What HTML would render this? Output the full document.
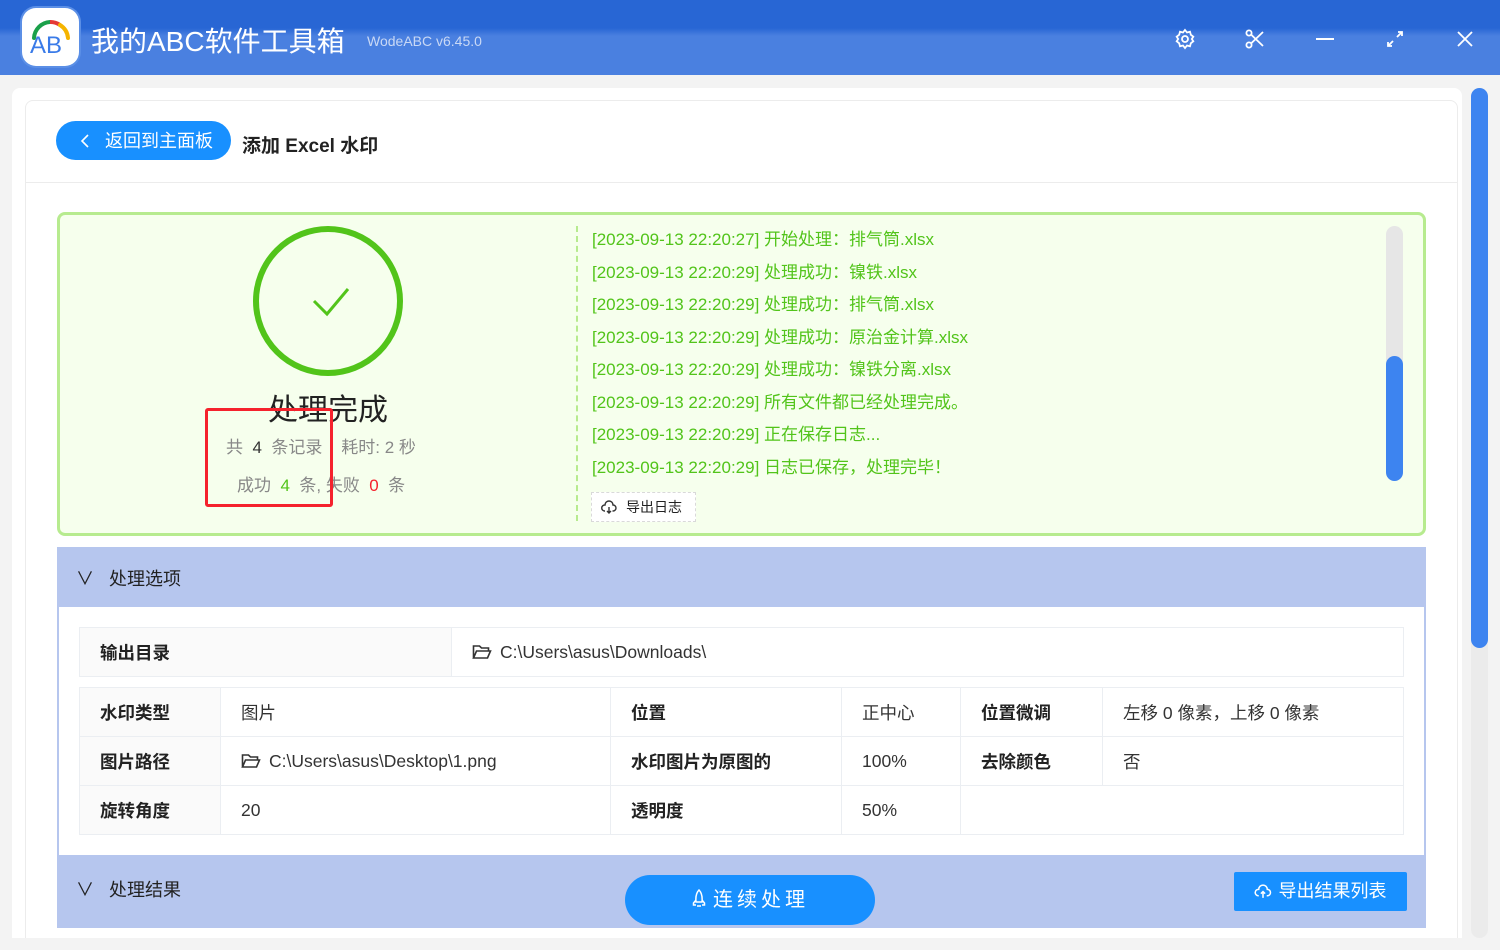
<!DOCTYPE html>
<html><head><meta charset="utf-8">
<style>
*{margin:0;padding:0;box-sizing:border-box}
html,body{width:1500px;height:950px;overflow:hidden}
body{background:#f3f3f3;font-family:"Liberation Sans","Noto Sans CJK SC",sans-serif;position:relative;color:#222}
.abs{position:absolute}
#hdr{left:0;top:0;width:1500px;height:75px;background:linear-gradient(#2866d4 0,#2866d4 28px,#4a80e0 36px,#4a80e0 75px)}
#logo{left:22px;top:8px;width:57px;height:58px;background:#fff;border-radius:14px;box-shadow:0 0 0 2px #5b8fe6}
.t1{left:91px;top:20px;color:#fff;font-size:28px;white-space:nowrap}
.t2{left:367px;top:33px;color:#c9d8f5;font-size:14px;white-space:nowrap}
.ic{top:28px;width:22px;height:22px}
#card{left:12px;top:88px;width:1450px;height:862px;background:#fff;border-radius:8px}
#panel{left:25px;top:100px;width:1433px;height:860px;border:1px solid #ececec;border-radius:8px}
#hline{left:26px;top:182px;width:1431px;height:1px;background:#ececec}
#back{left:56px;top:121px;width:175px;height:39px;background:#1890ff;border-radius:20px;color:#fff;font-size:18px;line-height:41px;padding-left:49px}
#title{left:242px;top:131px;font-size:19px;font-weight:bold}
#green{left:57px;top:212px;width:1369px;height:324px;border:3px solid #b7eb8f;background:#f6ffed;border-radius:8px}
.log{left:592px;font-size:17px;color:#52c41a;white-space:nowrap}
.sec{left:57px;width:1369px;background:#b6c6ee}
.sect{font-size:18px;color:#222}
table{border-collapse:collapse;position:absolute;font-size:17.5px}
td{border:1px solid #ebeef2;height:49px;padding-left:20px;color:#333;white-space:nowrap}
td.l{background:#fafafa;font-weight:bold;color:#222}
.btn{background:#1890ff;color:#fff;text-align:center}
.fd{vertical-align:-2px;margin-right:8px}
</style></head><body>
<div id="hdr" class="abs"></div>
<div id="logo" class="abs"><svg width="57" height="58" viewBox="0 0 57 58"><path d="M12 30 A17 17 0 0 1 28 14" stroke="#1aa04a" stroke-width="4" fill="none" stroke-linecap="round"/><path d="M28 14 A17 17 0 0 1 38 17" stroke="#e53935" stroke-width="4" fill="none"/><path d="M38 17 A17 17 0 0 1 46 30" stroke="#f5b400" stroke-width="4" fill="none" stroke-linecap="round"/><text x="8" y="45" font-size="24" font-family="Liberation Sans" fill="#3a7be8">AB</text></svg></div>
<div class="abs t1">我的ABC软件工具箱</div>
<div class="abs t2">WodeABC v6.45.0</div>
<svg class="abs ic" style="left:1174px" viewBox="0 0 22 22" fill="none" stroke="#fff" stroke-width="1.8"><circle cx="11" cy="11" r="3"/><path d="M11 2l2 2.5 3-.8.8 3 2.5 2-1.5 2.3 1.5 2.3-2.5 2-.8 3-3-.8L11 20l-2-2.5-3 .8-.8-3L2.7 13.3 4.2 11 2.7 8.7l2.5-2 .8-3 3 .8z"/></svg>
<svg class="abs ic" style="left:1244px" viewBox="0 0 22 22" fill="none" stroke="#fff" stroke-width="1.8"><circle cx="5" cy="5" r="2.6"/><circle cx="5" cy="17" r="2.6"/><path d="M7 6.5L19 18M7 15.5L19 4"/></svg>
<div class="abs" style="left:1316px;top:38px;width:18px;height:2px;background:#fff"></div>
<svg class="abs ic" style="left:1384px" viewBox="0 0 22 22" fill="none" stroke="#fff" stroke-width="1.8"><path d="M13 9l5-5M14 4h4v4M9 13l-5 5M4 14v4h4"/></svg>
<svg class="abs ic" style="left:1454px" viewBox="0 0 22 22" fill="none" stroke="#fff" stroke-width="1.8"><path d="M4 4l14 14M18 4L4 18"/></svg>

<div id="card" class="abs"></div>
<div id="panel" class="abs"></div>
<div id="hline" class="abs"></div>
<div id="back" class="abs"><svg style="position:absolute;left:24px;top:13px" width="10" height="14" viewBox="0 0 10 14" fill="none" stroke="#fff" stroke-width="1.6"><path d="M8 1L2 7l6 6"/></svg>返回到主面板</div>
<div id="title" class="abs">添加 Excel 水印</div>

<div id="green" class="abs"></div>
<svg class="abs" style="left:250px;top:224px" width="156" height="156"><circle cx="78" cy="77" r="72" stroke="#52c41a" stroke-width="6" fill="none"/><path d="M64 77l13 13 21-25" stroke="#52c41a" stroke-width="3" fill="none"/></svg>
<div class="abs" style="left:268px;top:385px;font-size:30px;color:#222">处理完成</div>
<div class="abs" style="left:226px;top:433px;font-size:17px;color:#888;white-space:nowrap">共&nbsp; <span style="color:#333">4</span>&nbsp; 条记录&nbsp;&nbsp;&nbsp;&nbsp;耗时: 2 秒</div>
<div class="abs" style="left:237px;top:471px;font-size:17px;color:#888;white-space:nowrap">成功&nbsp; <span style="color:#52c41a">4</span>&nbsp; 条, 失败&nbsp; <span style="color:#f5222d">0</span>&nbsp; 条</div>
<div class="abs" style="left:205px;top:408px;width:128px;height:99px;border:3px solid #f5222d;border-radius:3px"></div>
<div class="abs" style="left:576px;top:226px;height:295px;border-left:2px dashed #b7eb8f"></div>
<div class="abs log" style="top:225px">[2023-09-13 22:20:27] 开始处理：排气筒.xlsx</div>
<div class="abs log" style="top:258px">[2023-09-13 22:20:29] 处理成功：镍铁.xlsx</div>
<div class="abs log" style="top:290px">[2023-09-13 22:20:29] 处理成功：排气筒.xlsx</div>
<div class="abs log" style="top:323px">[2023-09-13 22:20:29] 处理成功：原治金计算.xlsx</div>
<div class="abs log" style="top:355px">[2023-09-13 22:20:29] 处理成功：镍铁分离.xlsx</div>
<div class="abs log" style="top:388px">[2023-09-13 22:20:29] 所有文件都已经处理完成。</div>
<div class="abs log" style="top:420px">[2023-09-13 22:20:29] 正在保存日志...</div>
<div class="abs log" style="top:453px">[2023-09-13 22:20:29] 日志已保存，处理完毕！</div>
<div class="abs" style="left:591px;top:492px;width:105px;height:30px;border:1px dashed #d9d9d9;background:#fff;font-size:14px;line-height:28px;padding-left:34px;color:#222">导出日志<svg style="position:absolute;left:9px;top:7px" width="16" height="14" viewBox="0 0 16 14" fill="none" stroke="#333" stroke-width="1.4"><path d="M4 11H3.5A3 3 0 0 1 4 5a4 4 0 0 1 8 0 3 3 0 0 1 0 6h-.5M8 7v6M6 11l2 2 2-2"/></svg></div>
<div class="abs" style="left:1386px;top:226px;width:17px;height:255px;background:#e6e6e6;border-radius:9px"></div>
<div class="abs" style="left:1386px;top:356px;width:17px;height:125px;background:#3d84f0;border-radius:9px"></div>

<div class="abs sec" style="top:547px;height:60px"></div>
<div class="abs" style="left:57px;top:606px;width:1369px;height:250px;border-left:2px solid #b6c6ee;border-right:2px solid #b6c6ee"></div>
<div class="abs sect" style="left:76px;top:565px">∨&nbsp;&nbsp; 处理选项</div>
<table style="left:79px;top:627px;width:1325px"><tr><td class="l" style="width:372px">输出目录</td><td><svg class="fd" width="20" height="16" viewBox="0 0 20 16" fill="none" stroke="#333" stroke-width="1.6"><path d="M1.5 14V2h6l2 2h7v3M1.5 14l3-7h14l-3 7z"/></svg>C:\Users\asus\Downloads\</td></tr></table>
<table style="left:79px;top:687px;width:1325px">
<tr><td class="l" style="width:141px">水印类型</td><td style="width:390px">图片</td><td class="l" style="width:231px;background:#fff">位置</td><td style="width:119px">正中心</td><td class="l" style="width:142px;background:#fff">位置微调</td><td>左移 0 像素，上移 0 像素</td></tr>
<tr><td class="l">图片路径</td><td><svg class="fd" width="20" height="16" viewBox="0 0 20 16" fill="none" stroke="#333" stroke-width="1.6"><path d="M1.5 14V2h6l2 2h7v3M1.5 14l3-7h14l-3 7z"/></svg>C:\Users\asus\Desktop\1.png</td><td class="l" style="background:#fff">水印图片为原图的</td><td>100%</td><td class="l" style="background:#fff">去除颜色</td><td>否</td></tr>
<tr><td class="l">旋转角度</td><td>20</td><td class="l" style="background:#fff">透明度</td><td>50%</td><td colspan="2" style="border-left:none"></td></tr>
</table>

<div class="abs sec" style="top:855px;height:73px"></div>
<div class="abs sect" style="left:76px;top:876px">∨&nbsp;&nbsp; 处理结果</div>
<div class="abs btn" style="left:625px;top:875px;width:250px;height:50px;border-radius:25px;font-size:20px;line-height:50px;letter-spacing:4px"><svg style="vertical-align:-3px;margin-right:6px" width="16" height="20" viewBox="0 0 16 20" fill="none" stroke="#fff" stroke-width="1.5"><path d="M8 1C5 4 4.5 8 5 13h6c.5-5 0-9-3-12zM5 11l-2.5 3v2H5M11 11l2.5 3v2H11M7 16v2M9 16v2"/></svg>连续处理</div>
<div class="abs btn" style="left:1234px;top:872px;width:173px;height:39px;border-radius:2px;font-size:18px;line-height:39px;padding-left:24px">导出结果列表<svg style="position:absolute;left:20px;top:12px" width="18" height="15" viewBox="0 0 16 14" fill="none" stroke="#fff" stroke-width="1.4"><path d="M4 11H3.5A3 3 0 0 1 4 5a4 4 0 0 1 8 0 3 3 0 0 1 0 6h-.5M8 7v6M6 9l2-2 2 2"/></svg></div>
<div class="abs" style="left:0;top:938px;width:1500px;height:12px;background:#f3f3f3"></div>
<div class="abs" style="left:1471px;top:88px;width:17px;height:850px;background:#ebebeb;border-radius:9px"></div>
<div class="abs" style="left:1471px;top:88px;width:17px;height:560px;background:#3d84f0;border-radius:9px"></div>
</body></html>
